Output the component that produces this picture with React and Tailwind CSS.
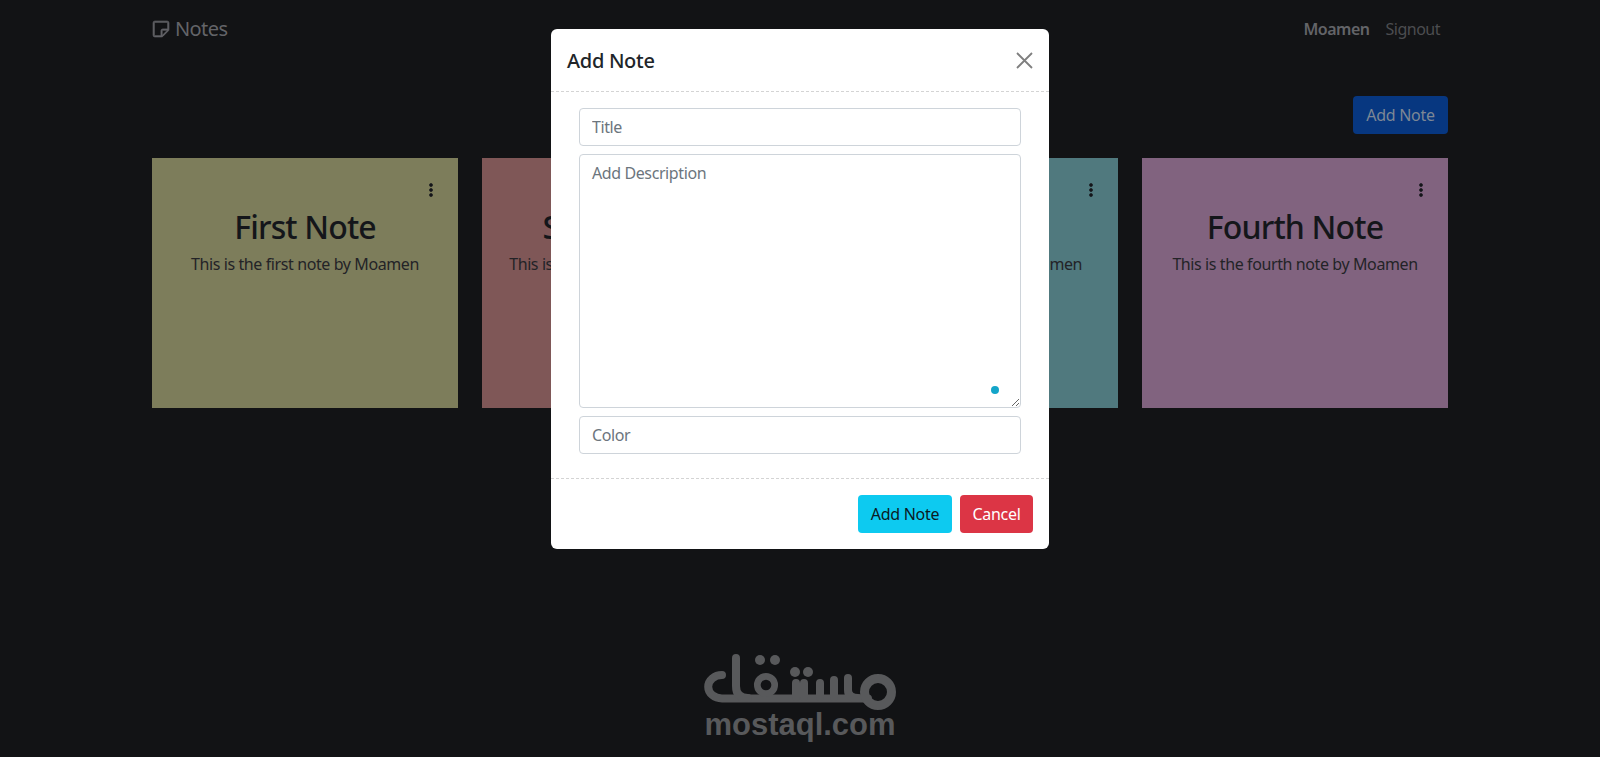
import { BsSticky, BsThreeDotsVertical } from 'react-icons/bs';

const notes = [
	{ title: 'First Note', text: 'This is the first note by Moamen', color: 'bg-[#7d7d5b]' },
	{ title: 'Second Note', text: 'This is the second note by Moamen', color: 'bg-[#7f5757]' },
	{ title: 'Third Note', text: 'This is the third note by Moamen', color: 'bg-[#50797e]' },
	{ title: 'Fourth Note', text: 'This is the fourth note by Moamen', color: 'bg-[#81637f]' },
];

const inputClass =
	'block w-full h-[38px] rounded border border-[#ced4da] bg-white px-3 text-[16px] tracking-[-0.4px] text-[#212529] outline-none placeholder:text-[#6c757d]';

function NoteCard({ note }) {
	return (
		<div className={`flex h-[250px] flex-col items-center px-4 pt-4 text-[#14161a] ${note.color}`}>
			<div className="flex w-full justify-end pr-[3px] pt-2 text-[16px]">
				<BsThreeDotsVertical stroke="currentColor" strokeWidth="0.7" />
			</div>
			<h2 className="mt-[10px] text-[32px] font-medium leading-[38px] tracking-[-0.85px]">{note.title}</h2>
			<p className="mt-[6px] text-[16px] leading-6 tracking-[-0.4px] text-[#232327]">{note.text}</p>
		</div>
	);
}

function Logo() {
	return (
		<svg width="192" height="56" viewBox="704 654 192 56" fill="none" stroke="#58595b" strokeWidth="8" strokeLinecap="round" aria-label="مستقل" role="img">
			{/* lam with its open ring, and the baseline */}
			<path d="M722 675 A13.5 11.5 0 1 0 722 698.5 H868" />
			<path d="M736 658 V686 Q736 698 748 698" />
			{/* qaf loop and dots */}
			<circle cx="766" cy="685" r="8.7" strokeWidth="6.7" />
			<circle cx="760" cy="660" r="5" fill="#58595b" stroke="none" />
			<circle cx="775" cy="660" r="5" fill="#58595b" stroke="none" />
			{/* teeth of the seen and the sheen */}
			<path d="M796 683 V697 M804 683 V697 M820 683 V697 M834 680 V697 M848 678 V690 Q848 698 858 698" />
			<circle cx="795" cy="672" r="5" fill="#58595b" stroke="none" />
			<circle cx="808" cy="672" r="5" fill="#58595b" stroke="none" />
			{/* meem */}
			<circle cx="878" cy="692" r="13.5" strokeWidth="9" />
		</svg>
	);
}

function AddNoteModal() {
	return (
		<div className="absolute left-[551px] top-[29px] w-[498px] rounded-md bg-white text-[#212529]">
			<div className="flex h-[63px] items-center justify-between border-b border-dashed border-[#d4d4d4] px-4 pt-[1px]">
				<h5 className="text-[20px] font-medium tracking-[-0.3px]">Add Note</h5>
				<svg width="17" height="17" viewBox="0 0 17 17" stroke="#7f7f7f" strokeWidth="1.8">
					<path d="M1 1 L16 16 M16 1 L1 16" />
				</svg>
			</div>
			<div className="flex flex-col gap-2 px-7 pb-6 pt-4">
				<input className={inputClass} placeholder="Title" />
				<div className="relative">
					<textarea
						className="block h-[254px] w-full rounded border border-[#ced4da] bg-white px-3 py-[6px] text-[16px] tracking-[-0.4px] outline-none placeholder:text-[#6c757d]"
						placeholder="Add Description"
					/>
					<span className="absolute bottom-[14px] right-[22px] h-2 w-2 rounded-full bg-[#13a5c9]" />
				</div>
				<input className={inputClass} placeholder="Color" />
			</div>
			<div className="flex justify-end gap-2 border-t border-dashed border-[#d4d4d4] px-4 pb-4 pt-4">
				<button className="h-[38px] w-[94px] rounded bg-[#0dcaf0] text-[16px] tracking-[-0.3px] text-[#0b1a24]">Add Note</button>
				<button className="h-[38px] w-[73px] rounded bg-[#dc3545] text-[16px] tracking-[-0.3px] text-white">Cancel</button>
			</div>
		</div>
	);
}

export default function App() {
	return (
		<div className="relative h-[757px] overflow-hidden bg-[#121315] font-['Noto_Sans',sans-serif]">
			<div className="mx-auto w-[1296px]">
				<nav className="flex h-[57px] items-center justify-between">
					<div className="flex items-center gap-[5px] text-[20px] tracking-[-0.6px] text-[#636468]">
						<BsSticky className="text-[18px]" stroke="currentColor" strokeWidth="0.7" />
						<span>Notes</span>
					</div>
					<div className="flex items-center gap-4 pr-2 text-[16px] tracking-[-0.5px]">
						<span className="font-semibold text-[#636468]">Moamen</span>
						<span className="text-[#4c4d50]">Signout</span>
					</div>
				</nav>
				<div className="flex justify-end pt-[39px]">
					<button className="h-[38px] w-[95px] rounded bg-[#073780] text-[16px] tracking-[-0.3px] text-[#7d8795]">Add Note</button>
				</div>
				<div className="mt-6 grid grid-cols-4 gap-6">
					{notes.map((note) => (
						<NoteCard key={note.title} note={note} />
					))}
				</div>
			</div>
			<AddNoteModal />
			<div className="absolute left-[704px] top-[654px] flex w-[192px] flex-col items-center">
				<Logo />
				<span className="font-['Liberation_Sans',sans-serif] text-[31px] font-bold leading-[30px] text-[#58595b]">mostaql.com</span>
			</div>
		</div>
	);
}
